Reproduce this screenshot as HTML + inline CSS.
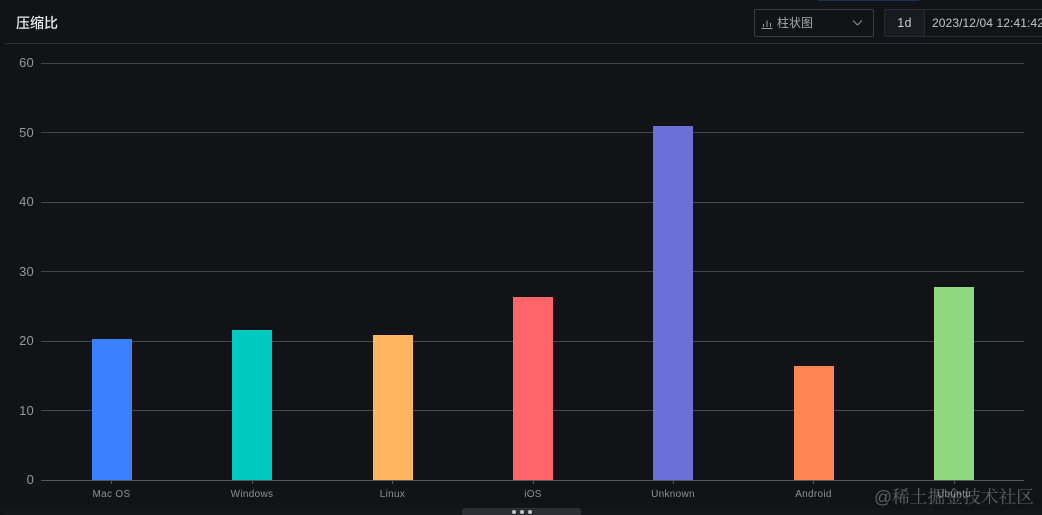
<!DOCTYPE html>
<html lang="zh">
<head>
<meta charset="utf-8">
<style>
html,body{margin:0;padding:0;background:#111317;}
body{width:1042px;height:515px;overflow:hidden;position:relative;font-family:"Liberation Sans","Noto Sans CJK SC",sans-serif;}
.a{position:absolute;}
.g{position:absolute;left:41px;width:983px;height:1px;background:#46484c;}
.y{position:absolute;left:0;width:34px;text-align:right;font-size:13px;line-height:14px;color:#96979a;letter-spacing:.2px;}
.b{position:absolute;width:40px;bottom:35px;}
.x{position:absolute;top:488px;width:120px;text-align:center;font-size:10px;line-height:13px;color:#8f9093;letter-spacing:.3px;}
.t{position:absolute;top:480px;width:1px;height:4px;background:#55575b;}
</style>
</head>
<body>
<div class="a" style="left:818px;top:0;width:101px;height:1px;background:#173052"></div>
<div class="a" style="left:5px;top:43px;width:1037px;height:1px;background:#2c2e32"></div>
<div class="a" style="left:16px;top:13px;font-size:14px;line-height:20px;font-weight:500;color:#eceded">压缩比</div>

<div class="a" style="left:754px;top:9px;width:118px;height:26px;border:1px solid #3a3c40;border-radius:2px"></div>
<svg class="a" style="left:761px;top:18px" width="12" height="12" viewBox="0 0 12 12" fill="none" stroke="#9a9b9e" stroke-width="1"><path d="M0.5 10.5H11.5M2.5 9V6M6 9V2.5M9.5 9V5"/></svg>
<div class="a" style="left:777px;top:14px;font-size:12px;line-height:18px;color:#a6a7a9">柱状图</div>
<svg class="a" style="left:852px;top:19px" width="11" height="8" viewBox="0 0 11 8" fill="none" stroke="#8b8c8f" stroke-width="1.1"><path d="M1 1.5L5.5 6L10 1.5"/></svg>

<div class="a" style="left:884px;top:9px;width:158px;height:26px;border:1px solid #2a2c30;border-right:0;border-radius:2px 0 0 2px"></div>
<div class="a" style="left:885px;top:10px;width:39px;height:26px;background:#181c22;border-right:1px solid #2a2c30;text-align:center;font-size:12.5px;line-height:26px;color:#c8c9ca;letter-spacing:.3px">1d</div>
<div class="a" style="left:932px;top:14px;font-size:12px;line-height:18px;color:#c4c5c6;white-space:nowrap;letter-spacing:.1px">2023/12/04 12:41:42</div>

<div class="g" style="top:63px"></div>
<div class="g" style="top:132px"></div>
<div class="g" style="top:202px"></div>
<div class="g" style="top:271px"></div>
<div class="g" style="top:341px"></div>
<div class="g" style="top:410px"></div>

<div class="y" style="top:56px">60</div>
<div class="y" style="top:126px">50</div>
<div class="y" style="top:195px">40</div>
<div class="y" style="top:265px">30</div>
<div class="y" style="top:334px">20</div>
<div class="y" style="top:404px">10</div>
<div class="y" style="top:473px">0</div>

<div class="b" style="left:91.5px;height:141px;background:#3a82fd"></div>
<div class="b" style="left:232px;height:150px;background:#00c9c2"></div>
<div class="b" style="left:372.5px;height:145px;background:#ffb55f"></div>
<div class="b" style="left:513px;height:183px;background:#ff666c"></div>
<div class="b" style="left:653px;height:354px;background:#6a70d8"></div>
<div class="b" style="left:793.5px;height:114px;background:#ff8652"></div>
<div class="b" style="left:934px;height:193px;background:#8ed980"></div>

<div class="a" style="left:41px;top:480px;width:983px;height:1px;background:#56585c"></div>
<div class="t" style="left:111px"></div>
<div class="t" style="left:252px"></div>
<div class="t" style="left:392px"></div>
<div class="t" style="left:533px"></div>
<div class="t" style="left:673px"></div>
<div class="t" style="left:813px"></div>
<div class="t" style="left:954px"></div>

<div class="x" style="left:51.5px">Mac OS</div>
<div class="x" style="left:192px">Windows</div>
<div class="x" style="left:332.5px">Linux</div>
<div class="x" style="left:473px">iOS</div>
<div class="x" style="left:613px">Unknown</div>
<div class="x" style="left:753.5px">Android</div>
<div class="x" style="left:894px">Ubuntu</div>

<div class="a" style="left:5px;top:509px;width:1037px;height:6px;background:#14161a"></div>
<div class="a" style="left:462px;top:508px;width:119px;height:7px;background:#2b2e33;border-radius:3px 3px 0 0"></div>
<div class="a" style="left:512px;top:510px;width:4px;height:4px;border-radius:50%;background:#c3c4c6"></div>
<div class="a" style="left:520px;top:510px;width:4px;height:4px;border-radius:50%;background:#c3c4c6"></div>
<div class="a" style="left:528px;top:510px;width:4px;height:4px;border-radius:50%;background:#c3c4c6"></div>

<div class="a" style="left:874px;top:486px;font-size:17.75px;line-height:22px;color:rgba(170,172,175,.5);white-space:nowrap;font-family:'Liberation Sans','Noto Serif CJK SC',serif">@稀土掘金技术社区</div>
</body>
</html>
